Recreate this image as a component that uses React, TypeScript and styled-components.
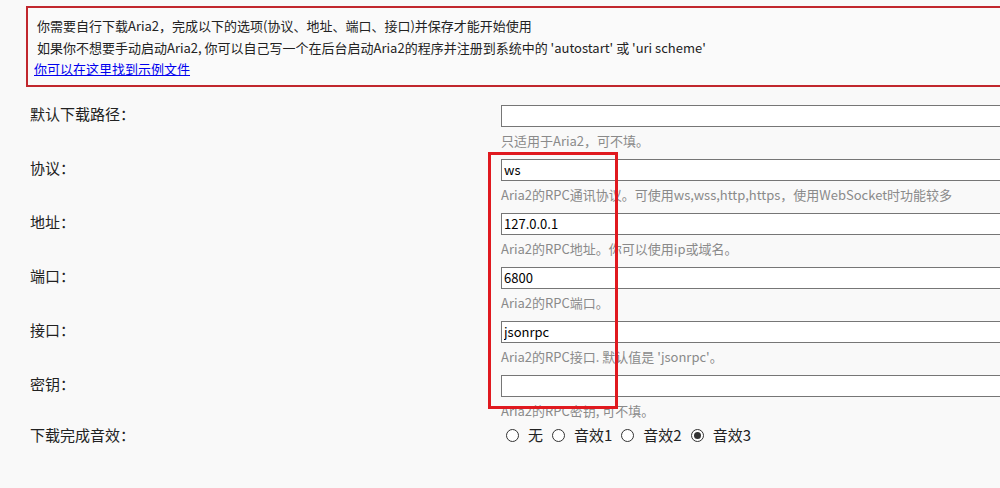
import React, { useState } from 'react';
import styled, { createGlobalStyle } from 'styled-components';

const GlobalStyle = createGlobalStyle`
  html, body {
    margin: 0;
    padding: 0;
    background: #f9f9f9;
    overflow: hidden;
  }
  body {
    font-family: 'Noto Sans CJK SC', 'Noto Sans', sans-serif;
    color: #222;
  }
`;

type FieldDef = {
  label: string;
  value: string;
  hint: string;
};

const fields: FieldDef[] = [
  { label: '默认下载路径：', value: '', hint: '只适用于Aria2，可不填。' },
  { label: '协议：', value: 'ws', hint: 'Aria2的RPC通讯协议。可使用ws,wss,http,https，使用WebSocket时功能较多' },
  { label: '地址：', value: '127.0.0.1', hint: 'Aria2的RPC地址。你可以使用ip或域名。' },
  { label: '端口：', value: '6800', hint: 'Aria2的RPC端口。' },
  { label: '接口：', value: 'jsonrpc', hint: "Aria2的RPC接口. 默认值是 'jsonrpc'。" },
  { label: '密钥：', value: '', hint: 'Aria2的RPC密钥, 可不填。' },
];

const sounds = ['无', '音效1', '音效2', '音效3'];

function App() {
  const [sound, setSound] = useState<string>('音效3');

  return (
    <Page>
      <GlobalStyle />
      <Notice>
        <NoticeLine>你需要自行下载Aria2，完成以下的选项(协议、地址、端口、接口)并保存才能开始使用</NoticeLine>
        <NoticeLine>
          如果你不想要手动启动Aria2, 你可以自己写一个在后台启动Aria2的程序并注册到系统中的 'autostart' 或 'uri scheme'
        </NoticeLine>
        <NoticeLink href="#">你可以在这里找到示例文件</NoticeLink>
      </Notice>
      <Form onSubmit={(e) => e.preventDefault()}>
        {fields.map((f) => (
          <Row key={f.label}>
            <Label>{f.label}</Label>
            <Control>
              <TextInput defaultValue={f.value} />
              <Hint>{f.hint}</Hint>
            </Control>
          </Row>
        ))}
        <Row $compact>
          <Label>下载完成音效：</Label>
          <RadioGroup>
            {sounds.map((s) => (
              <RadioOption key={s}>
                <Radio
                  type="radio"
                  name="sound"
                  checked={sound === s}
                  onChange={() => setSound(s)}
                />
                {s}
              </RadioOption>
            ))}
          </RadioGroup>
        </Row>
      </Form>
      <Highlight />
    </Page>
  );
}

const Page = styled.div`
  position: relative;
  width: 1100px;
  padding: 6px 0 0 26px;
  box-sizing: border-box;
  min-height: 488px;
`;

const Notice = styled.div`
  border: 2px solid #c1272d;
  background: #fafafa;
  padding: 7px 6px 5px 6px;
  font-size: 13px;
  line-height: 21.5px;
  display: flex;
  flex-direction: column;
  align-items: flex-start;
`;

const NoticeLine = styled.div`
  padding-left: 3px;
  color: #222;
`;

const NoticeLink = styled.a`
  color: #0000ee;
  text-decoration: underline;
`;

const Form = styled.form`
  margin-top: 18px;
  padding-left: 4px;
  display: flex;
  flex-direction: column;
  gap: 9px;
`;

const Row = styled.div<{ $compact?: boolean }>`
  display: grid;
  grid-template-columns: 471px 540px;
  align-items: start;
  line-height: ${(p) => (p.$compact ? '12px' : '18px')};
`;

const Label = styled.div`
  font-size: 15px;
  color: #222;
`;

const Control = styled.div`
  display: flex;
  flex-direction: column;
  gap: 5px;
`;

const TextInput = styled.input`
  box-sizing: border-box;
  width: 100%;
  height: 22px;
  border: 1px solid #767676;
  background: #fff;
  padding: 0 2px;
  font-family: 'Noto Sans CJK SC', 'Noto Sans', sans-serif;
  font-size: 13px;
  color: #000;
  outline: none;
`;

const Hint = styled.div`
  font-size: 13px;
  line-height: 18px;
  color: #8a8a8a;
`;

const RadioGroup = styled.div`
  display: flex;
  align-items: center;
  gap: 9px;
  padding-left: 5px;
  font-size: 15px;
  color: #222;
`;

const RadioOption = styled.label`
  display: inline-flex;
  align-items: center;
  gap: 9px;
`;

const Radio = styled.input`
  appearance: none;
  margin: 0;
  width: 13px;
  height: 13px;
  border: 1px solid #333;
  border-radius: 50%;
  background: #fff;
  box-sizing: border-box;
  display: grid;
  place-items: center;
  &:checked::after {
    content: '';
    width: 7px;
    height: 7px;
    border-radius: 50%;
    background: #333;
  }
`;

const Highlight = styled.div`
  position: absolute;
  left: 488px;
  top: 152px;
  width: 130px;
  height: 257px;
  box-sizing: border-box;
  border: 3px solid #e0191f;
  pointer-events: none;
`;

export default App;
